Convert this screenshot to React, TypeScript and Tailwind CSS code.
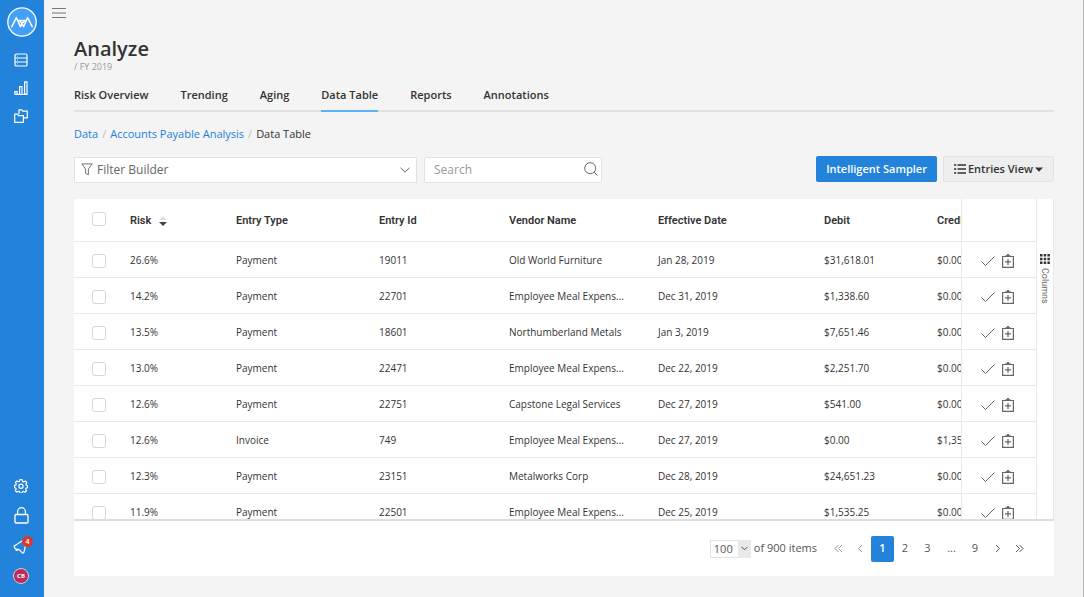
import type { ReactNode } from "react";

type Entry = {
  risk: string;
  type: string;
  id: string;
  vendor: string;
  date: string;
  debit: string;
  credit: string;
};

const tabs = ["Risk Overview", "Trending", "Aging", "Data Table", "Reports", "Annotations"];

const columns = ["Entry Type", "Entry Id", "Vendor Name", "Effective Date", "Debit", "Credit"];

const entries: Entry[] = [
  { risk: "26.6%", type: "Payment", id: "19011", vendor: "Old World Furniture", date: "Jan 28, 2019", debit: "$31,618.01", credit: "$0.00" },
  { risk: "14.2%", type: "Payment", id: "22701", vendor: "Employee Meal Expens...", date: "Dec 31, 2019", debit: "$1,338.60", credit: "$0.00" },
  { risk: "13.5%", type: "Payment", id: "18601", vendor: "Northumberland Metals", date: "Jan 3, 2019", debit: "$7,651.46", credit: "$0.00" },
  { risk: "13.0%", type: "Payment", id: "22471", vendor: "Employee Meal Expens...", date: "Dec 22, 2019", debit: "$2,251.70", credit: "$0.00" },
  { risk: "12.6%", type: "Payment", id: "22751", vendor: "Capstone Legal Services", date: "Dec 27, 2019", debit: "$541.00", credit: "$0.00" },
  { risk: "12.6%", type: "Invoice", id: "749", vendor: "Employee Meal Expens...", date: "Dec 27, 2019", debit: "$0.00", credit: "$1,350.00" },
  { risk: "12.3%", type: "Payment", id: "23151", vendor: "Metalworks Corp", date: "Dec 28, 2019", debit: "$24,651.23", credit: "$0.00" },
  { risk: "11.9%", type: "Payment", id: "22501", vendor: "Employee Meal Expens...", date: "Dec 25, 2019", debit: "$1,535.25", credit: "$0.00" },
];

export default function App() {
  return (
    <div className="flex min-h-screen border-r border-[#b5b5b5] bg-[#f4f4f4] font-['Open_Sans',sans-serif] text-[#333]">
      <Sidebar />
      <main className="min-w-0 flex-1">
        <button aria-label="Toggle menu" className="mt-1 ml-2 block text-[#777]">
          <svg width="14" height="18" viewBox="0 0 14 18" stroke="currentColor">
            <path d="M0 4.500h14M0 9h14M0 13.500h14" />
          </svg>
        </button>

        <div className="pt-4 pr-[29px] pb-5 pl-[30px]">
          <h1 className="text-[20px] leading-[22px] font-semibold">Analyze</h1>
          <p className="text-[9px] leading-[14px] text-[#999]">/ FY 2019</p>
          <Tabs />
          <Breadcrumb />
          <Toolbar />
          <section className="mt-[17px] bg-white">
            <EntriesTable />
            <Pagination />
          </section>
        </div>
      </main>
    </div>
  );
}

function Sidebar() {
  return (
    <nav className="flex w-11 shrink-0 flex-col items-center bg-[#2382d9] pr-0.5 text-white">
      <a href="#" aria-label="Home" className="mt-[7px] ml-px">
        <svg width="30" height="30" viewBox="0 0 30 30" fill="none">
          <circle cx="15" cy="15" r="14.2" fill="#42a0fa" stroke="#fff" strokeWidth="1.3" />
          <path
            d="M4.800 19.600L9.400 10.600l4 9L15 16.800l1.600 2.800 4-9 4.600 9M10.600 13.400h8.800M12.400 13.600L15 16.800l2.600-3.200"
            stroke="#fff"
            strokeWidth="1.5"
            strokeLinejoin="round"
            strokeLinecap="round"
          />
        </svg>
      </a>
      <div className="mt-4 flex flex-col gap-[14px]">
        <NavIcon label="Data">
          <rect x="1" y="1" width="12" height="12" rx="1.6" />
          <path d="M1 5h12M1 9h12M3 3h.8M3 7h.8M3 11h.8" />
        </NavIcon>
        <NavIcon label="Analyze">
          <path d="M0.8 13.3v-2.6h2.4v2.6M5.6 13.3V5.6H8v7.7M10.6 13.3V0.8H13v12.5M3.2 13.3V10.7M0.5 13.3h13" />
        </NavIcon>
        <NavIcon label="Files">
          <path d="M0.700 5.200h2.800l1 1.400h4.900v6.700H0.700zM5 5V0.800h2.800l1 1.400h4.500v6.600H9.600" />
        </NavIcon>
      </div>
      <div className="mt-auto mb-[13px] flex flex-col items-center gap-[14px]">
        <NavIcon label="Settings">
          <path d="M5.8 0.7h2.4l.4 1.7 1.1.5 1.6-.9 1.5 1.6-.9 1.6.4 1 1.3.4v2l-1.5.5-.4 1.1.9 1.5-1.6 1.5-1.5-.9-1.1.5-.4 1.3H5.9l-.4-1.5-1.1-.4-1.6.9-1.5-1.6.9-1.4-.5-1.1-1.2-.4V6.4l1.4-.4.4-1.1-.9-1.4L2.9 1.9l1.5.9 1-.4z" />
          <circle cx="7" cy="7.2" r="2.1" />
        </NavIcon>
        <a href="#" aria-label="Security">
          <svg width="15" height="17" viewBox="0 0 15 17" fill="none" stroke="currentColor" strokeWidth="1.3">
            <rect x="1" y="7.5" width="13" height="8.5" rx="1" />
            <path d="M3.6 7.5V4.6a3.9 3.9 0 017.8 0v2.9" />
          </svg>
        </a>
        <a href="#" aria-label="Notifications" className="relative">
          <svg width="16" height="16" viewBox="0 0 16 16" fill="none" stroke="currentColor" strokeWidth="1.2" strokeLinejoin="round">
            <path d="M10.5 2L1 8.2l1.2 2.6 4 .8 3.3 3.6 1.4-.8L12.8 6M2.2 10.5l1.2 1.8 1.6-.3" />
          </svg>
          <span className="absolute -top-0.5 -right-1 flex h-[11px] w-[11px] items-center justify-center rounded-full bg-[#d63a2f] text-[7px] leading-none font-semibold">
            4
          </span>
        </a>
        <button
          aria-label="Account"
          className="flex h-4 w-4 items-center justify-center rounded-full border border-[#e3c4d6] bg-[#b92d5d] text-[6px] leading-none font-bold"
        >
          CB
        </button>
      </div>
    </nav>
  );
}

function NavIcon({ label, children }: { label: string; children: ReactNode }) {
  return (
    <a href="#" aria-label={label}>
      <svg width="14" height="14" viewBox="0 0 14 14" fill="none" stroke="currentColor" strokeWidth="1.2" strokeLinejoin="round">
        {children}
      </svg>
    </a>
  );
}

function Tabs() {
  return (
    <nav className="mt-[13px] flex gap-8 border-b-2 border-[#e2e2e2]">
      {tabs.map((tab) => (
        <a
          key={tab}
          href="#"
          className={
            tab === "Data Table"
              ? "-mb-0.5 border-b-2 border-[#5fb0f8] pb-[7px] text-[11px] leading-4 font-semibold"
              : "pb-[7px] text-[11px] leading-4 font-semibold"
          }
        >
          {tab}
        </a>
      ))}
    </nav>
  );
}

function Breadcrumb() {
  return (
    <nav aria-label="Breadcrumb" className="mt-[14px] flex gap-1 text-[11px] leading-4">
      <a href="#" className="text-[#1c7fdc]">Data</a>
      <span className="text-[#bbb]">/</span>
      <a href="#" className="text-[#1c7fdc]">Accounts Payable Analysis</a>
      <span className="text-[#bbb]">/</span>
      <span>Data Table</span>
    </nav>
  );
}

function Toolbar() {
  return (
    <div className="mt-[14px] flex h-[26px]">
      <div className="relative w-[343px]">
        <select
          aria-label="Filter Builder"
          className="h-full w-full appearance-none border border-[#e2e2e2] bg-white pl-[22px] text-[12px] text-[#666]"
        >
          <option>Filter Builder</option>
        </select>
        <svg width="12" height="13" viewBox="0 0 12 13" fill="none" stroke="#777" className="pointer-events-none absolute top-[7px] left-[7px]">
          <path d="M0.8 0.9h10.4L7.4 6v5.7L4.6 10.3V6z" strokeLinejoin="round" />
        </svg>
        <Chevron className="pointer-events-none absolute top-[11px] right-[7px]" />
      </div>
      <div className="relative ml-[7px] w-[178px]">
        <input
          type="search"
          aria-label="Search"
          placeholder="Search"
          className="h-full w-full rounded-xs border border-[#e2e2e2] bg-white pl-[9px] text-[12px] placeholder:text-[#999]"
        />
        <svg width="14" height="14" viewBox="0 0 14 14" fill="none" stroke="#666" className="pointer-events-none absolute top-[6px] right-1">
          <circle cx="6.2" cy="6.2" r="5.5" />
          <path d="M10.2 10.2l3.3 3.3" />
        </svg>
      </div>
      <button className="ml-auto rounded-xs bg-[#2382d9] px-[10px] text-[11px] font-semibold text-white">
        Intelligent Sampler
      </button>
      <button className="ml-1.5 flex items-center rounded-xs border border-[#e2e2e2] bg-[#eee] px-2.5 text-[11px] font-semibold">
        <svg width="12" height="10" viewBox="0 0 12 10" stroke="currentColor" strokeWidth="1.600" className="mr-0.5">
          <path d="M3.500 1H12M3.500 5H12M3.500 9H12M0 1h2.200M0 5h2.200M0 9h2.200" />
        </svg>
        Entries View
        <svg width="8" height="5" viewBox="0 0 8 5" fill="currentColor" className="ml-0.5">
          <path d="M0 0.5h8L4 4.7z" />
        </svg>
      </button>
    </div>
  );
}

function Chevron({ className }: { className: string }) {
  return (
    <svg width="10" height="6" viewBox="0 0 10 6" fill="none" stroke="#666" className={className}>
      <path d="M0.5 0.8L5 5.2 9.5 0.8" />
    </svg>
  );
}

function Checkbox({ label }: { label: string }) {
  return (
    <input
      type="checkbox"
      aria-label={label}
      className="block h-[14px] w-[14px] appearance-none rounded-[3px] border border-[#d6d6d6] bg-white"
    />
  );
}

function EntriesTable() {
  return (
    <div className="flex h-[322px] border-b-2 border-[#dedede]">
      <div className="min-w-0 flex-1 overflow-hidden">
        <table className="w-full min-w-[1039px] table-fixed border-separate border-spacing-0 text-left text-[10px] leading-[14px]">
          <colgroup>
            <col className="w-11" />
            <col className="w-[106px]" />
            <col className="w-[143px]" />
            <col className="w-[130px]" />
            <col className="w-[149px]" />
            <col className="w-[166px]" />
            <col className="w-[113px]" />
            <col className="w-[113px]" />
            <col className="w-[75px]" />
          </colgroup>
          <thead className="font-[Roboto,sans-serif] text-[11px]">
            <tr className="h-[43px]">
              <th className="border-b border-[#e9e9e9] pb-0.5 pl-[18px]">
                <Checkbox label="Select all entries" />
              </th>
              <th className="border-b border-[#e9e9e9] px-3 pt-0.5 font-semibold">
                <button className="flex items-center gap-2">
                  Risk
                  <svg width="8" height="11" viewBox="0 0 8 11">
                    <path d="M0.5 4L4 0.5 7.5 4z" fill="#ddd" />
                    <path d="M0 6h8L4 10z" fill="#444" />
                  </svg>
                </button>
              </th>
              {columns.map((column) => (
                <th key={column} className="border-b border-[#e9e9e9] px-3 pt-0.5 font-semibold">
                  {column}
                </th>
              ))}
              <th aria-label="Actions" className="sticky right-0 border-b border-l border-[#e9e9e9] bg-white" />
            </tr>
          </thead>
          <tbody>
            {entries.map((entry) => (
              <EntryRow key={entry.id} entry={entry} />
            ))}
          </tbody>
        </table>
      </div>
      <button className="flex w-[18px] flex-col items-center gap-1 border-x border-[#e9e9e9] pt-[55px] text-[#666]">
        <svg width="10" height="10" viewBox="0 0 10 10" fill="#333">
          <path d="M0 0h2.5v2.5H0zM3.7 0h2.5v2.5H3.7zM7.4 0h2.5v2.5H7.4zM0 3.7h2.5v2.5H0zM3.7 3.7h2.5v2.5H3.7zM7.4 3.7h2.5v2.5H7.4zM0 7.4h2.5v2.5H0zM3.7 7.4h2.5v2.5H3.7zM7.4 7.4h2.5v2.5H7.4z" />
        </svg>
        <span className="font-[Roboto,sans-serif] text-[9px] leading-3 [writing-mode:vertical-rl]">Columns</span>
      </button>
    </div>
  );
}

function EntryRow({ entry }: { entry: Entry }) {
  const cells = [entry.risk, entry.type, entry.id, entry.vendor, entry.date, entry.debit, entry.credit];

  return (
    <tr className="h-9">
      <td className="border-b border-[#e9e9e9] pt-0.5 pl-[18px]">
        <Checkbox label={`Select entry ${entry.id}`} />
      </td>
      {cells.map((cell, i) => (
        <td key={i} className="truncate border-b border-[#e9e9e9] px-3">
          {cell}
        </td>
      ))}
      <td className="sticky right-0 border-b border-l border-[#e9e9e9] bg-white pt-[3px] pl-[19px]">
        <div className="flex items-center gap-[7px] text-[#666]">
          <button aria-label={`Approve entry ${entry.id}`}>
            <svg width="14" height="14" viewBox="0 0 14 14" fill="none" stroke="currentColor">
              <path d="M0.5 7.5l4 4 9-9" />
            </svg>
          </button>
          <button aria-label={`Add task for entry ${entry.id}`}>
            <svg width="12" height="14" viewBox="0 0 12 14" fill="none" stroke="currentColor">
              <path d="M0.6 2.5h10.8v10.9H0.6zM6 4.9v6M3 7.9h6" strokeWidth="1.2" />
              <path d="M3.3 2h5.4M5 0.7h2" strokeWidth="1.5" />
            </svg>
          </button>
        </div>
      </td>
    </tr>
  );
}

function Pagination() {
  return (
    <div className="flex h-[55px] items-center justify-end pr-6 text-[11px] text-[#555]">
      <div className="relative">
        <select
          aria-label="Items per page"
          className="block h-[18px] w-[41px] appearance-none border border-[#e2e2e2] bg-white pl-[3px] text-[11px] leading-4"
        >
          <option>100</option>
        </select>
        <span className="pointer-events-none absolute top-0 right-0 flex h-[18px] w-[13px] items-center justify-center bg-[#e9e9e9]">
          <svg width="7" height="5" viewBox="0 0 7 5" fill="none" stroke="#555">
            <path d="M0.5 0.8l3 3 3-3" />
          </svg>
        </span>
      </div>
      <span className="mr-[10px] ml-[3px]">of 900 items</span>
      <nav aria-label="Pagination" className="flex items-center">
        <PageArrow label="First page" d="M4.5 1L1 4.5 4.5 8M8 1L4.5 4.5 8 8" muted />
        <PageArrow label="Previous page" d="M6 1L2.5 4.5 6 8" muted />
        <button aria-current="page" className="h-[26px] w-[23px] rounded-xs bg-[#2382d9] font-semibold text-white">
          1
        </button>
        <button className="w-[22px]">2</button>
        <button className="w-[23px]">3</button>
        <span className="w-[25px] text-center">...</span>
        <button className="w-[22px]">9</button>
        <PageArrow label="Next page" d="M3 1l3.5 3.5L3 8" />
        <PageArrow label="Last page" d="M1 1l3.5 3.5L1 8M4.5 1L8 4.5 4.5 8" />
      </nav>
    </div>
  );
}

function PageArrow({ label, d, muted }: { label: string; d: string; muted?: boolean }) {
  return (
    <button aria-label={label} className={muted ? "flex w-[22px] justify-center text-[#999]" : "flex w-[22px] justify-center text-[#555]"}>
      <svg width="9" height="9" viewBox="0 0 9 9" fill="none" stroke="currentColor">
        <path d={d} />
      </svg>
    </button>
  );
}
